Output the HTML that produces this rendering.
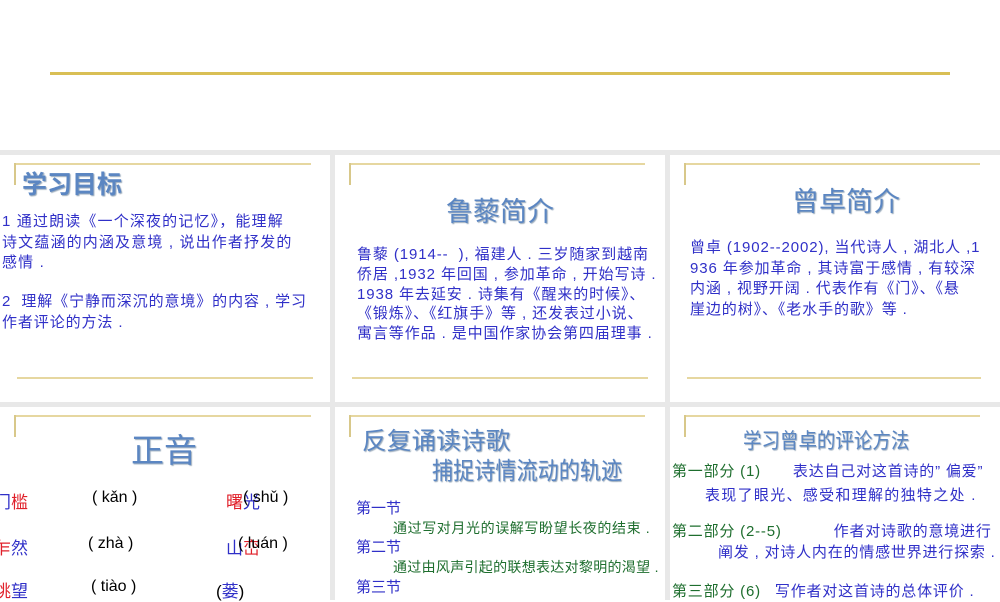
<!DOCTYPE html>
<html><head><meta charset="utf-8"><style>
*{margin:0;padding:0}
body{width:1000px;height:600px;overflow:hidden;background:#fff;position:relative;font-family:"Liberation Sans","Noto Sans CJK SC",sans-serif}
.a{position:absolute;white-space:nowrap}
.p{position:absolute;background:#fff}
.g{position:absolute;background:#e6d7a0}
.gv{position:absolute;background:#d8c88a;width:2px}
.t{position:absolute;white-space:nowrap;color:#5b86c2;text-shadow:1px 1px 1px #9ab;font-family:"Noto Sans CJK SC",sans-serif;transform-origin:0 0}
.b{color:#3030c8;font-size:15px;line-height:20.5px;letter-spacing:0.6px}
.gr{color:#1e6e2e}
.r{color:#e0202a}
.bl{color:#3030c8}
</style></head><body>
<div class="a" style="left:50px;top:72px;width:900px;height:3px;background:#d9bf55"></div>
<div class="a" style="left:0;top:150px;width:1000px;height:450px;background:#e8e8e8"></div>
<div class="p" style="left:0;top:155px;width:330px;height:247px"></div>
<div class="p" style="left:335px;top:155px;width:330px;height:247px"></div>
<div class="p" style="left:670px;top:155px;width:330px;height:247px"></div>
<div class="p" style="left:0;top:407px;width:330px;height:193px"></div>
<div class="p" style="left:335px;top:407px;width:330px;height:193px"></div>
<div class="p" style="left:670px;top:407px;width:330px;height:193px"></div>

<div class="g" style="left:14px;top:163px;width:297px;height:2px"></div><div class="gv" style="left:14px;top:163px;height:22px"></div>
<div class="g" style="left:17px;top:377px;width:296px;height:2px"></div>
<div class="g" style="left:349px;top:163px;width:296px;height:2px"></div><div class="gv" style="left:349px;top:163px;height:22px"></div>
<div class="g" style="left:352px;top:377px;width:296px;height:2px"></div>
<div class="g" style="left:684px;top:163px;width:296px;height:2px"></div><div class="gv" style="left:684px;top:163px;height:22px"></div>
<div class="g" style="left:687px;top:377px;width:294px;height:2px"></div>
<div class="g" style="left:14px;top:415px;width:297px;height:2px"></div><div class="gv" style="left:14px;top:415px;height:22px"></div>
<div class="g" style="left:349px;top:415px;width:296px;height:2px"></div><div class="gv" style="left:349px;top:415px;height:22px"></div>
<div class="g" style="left:684px;top:415px;width:296px;height:2px"></div><div class="gv" style="left:684px;top:415px;height:22px"></div>

<div class="t" style="left:22px;top:165px;font-size:25px;font-weight:bold">学习目标</div>
<div class="a b" style="left:2px;top:212px;letter-spacing:1.15px">1 通过朗读《一个深夜的记忆》，能理解<br>诗文蕴涵的内涵及意境 , 说出作者抒发的<br>感情 .</div>
<div class="a b" style="left:2px;top:292px;letter-spacing:0.9px">2&nbsp; 理解《宁静而深沉的意境》的内容 , 学习<br>作者评论的方法 .</div>

<div class="t" style="left:446px;top:190px;font-size:27px">鲁藜简介</div>
<div class="a b" style="left:357px;top:245px;line-height:19.8px;letter-spacing:0.9px">鲁藜 (1914--&nbsp; ), 福建人 . 三岁随家到越南<br>侨居 ,1932 年回国 , 参加革命 , 开始写诗 .<br>1938 年去延安 . 诗集有《醒来的时候》、<br>《锻炼》、《红旗手》等 , 还发表过小说、<br>寓言等作品 . 是中国作家协会第四届理事 .</div>

<div class="t" style="left:792px;top:180px;font-size:27px">曾卓简介</div>
<div class="a b" style="left:690px;top:238px;letter-spacing:0.9px">曾卓 (1902--2002), 当代诗人 , 湖北人 ,1<br>936 年参加革命 , 其诗富于感情 , 有较深<br>内涵 , 视野开阔 . 代表作有《门》、《悬<br>崖边的树》、《老水手的歌》等 .</div>

<div class="t" style="left:131px;top:424px;font-size:33px">正音</div>
<div class="a" style="left:-6px;top:488px;font-size:17px"><span class="bl">门</span><span class="r">槛</span></div>
<div class="a" style="left:-6px;top:534px;font-size:17px"><span class="r">乍</span><span class="bl">然</span></div>
<div class="a" style="left:-6px;top:577px;font-size:17px"><span class="r">眺</span><span class="bl">望</span></div>
<div class="a" style="left:92px;top:489px;font-size:16px">( kǎn )</div>
<div class="a" style="left:88px;top:535px;font-size:16px">( zhà )</div>
<div class="a" style="left:91px;top:578px;font-size:16px">( tiào )</div>
<div class="a" style="left:226px;top:488px;font-size:17px"><span class="r">曙</span><span class="bl">光</span></div>
<div class="a" style="left:243px;top:489px;font-size:16px">( shǔ )</div>
<div class="a" style="left:226px;top:534px;font-size:17px"><span class="bl">山</span><span class="r">峦</span></div>
<div class="a" style="left:238px;top:535px;font-size:16px">( luán )</div>
<div class="a" style="left:216px;top:577px;font-size:17px">(<span class="bl">蒌</span>)</div>

<div class="t" style="left:362px;top:421px;font-size:24px;transform:scaleX(1.03)">反复诵读诗歌</div>
<div class="t" style="left:432px;top:451px;font-size:24px;transform:scaleX(0.88)">捕捉诗情流动的轨迹</div>
<div class="a bl" style="left:356px;top:497px;font-size:15px">第一节</div>
<div class="a gr" style="left:393px;top:518px;font-size:14px;letter-spacing:0.6px">通过写对月光的误解写盼望长夜的结束 .</div>
<div class="a bl" style="left:356px;top:536px;font-size:15px">第二节</div>
<div class="a gr" style="left:393px;top:557px;font-size:14px;letter-spacing:0.3px">通过由风声引起的联想表达对黎明的渴望 .</div>
<div class="a bl" style="left:356px;top:576px;font-size:15px">第三节</div>

<div class="t" style="left:743px;top:425px;font-size:21px;transform:scaleX(0.88)">学习曾卓的评论方法</div>
<div class="a" style="left:672px;top:460px;font-size:15px;letter-spacing:0.8px"><span class="gr">第一部分 (1)</span><span class="bl" style="margin-left:32px">表达自己对这首诗的” 偏爱”</span></div>
<div class="a bl" style="left:705px;top:484px;font-size:15px;letter-spacing:1.3px">表现了眼光、感受和理解的独特之处 .</div>
<div class="a" style="left:672px;top:520px;font-size:15px;letter-spacing:0.8px"><span class="gr">第二部分 (2--5)</span><span class="bl" style="margin-left:52px">作者对诗歌的意境进行</span></div>
<div class="a bl" style="left:718px;top:541px;font-size:15px;letter-spacing:0.8px">阐发 , 对诗人内在的情感世界进行探索 .</div>
<div class="a" style="left:672px;top:580px;font-size:15px;letter-spacing:0.8px"><span class="gr">第三部分 (6)</span><span class="bl" style="margin-left:14px">写作者对这首诗的总体评价 .</span></div>
</body></html>
